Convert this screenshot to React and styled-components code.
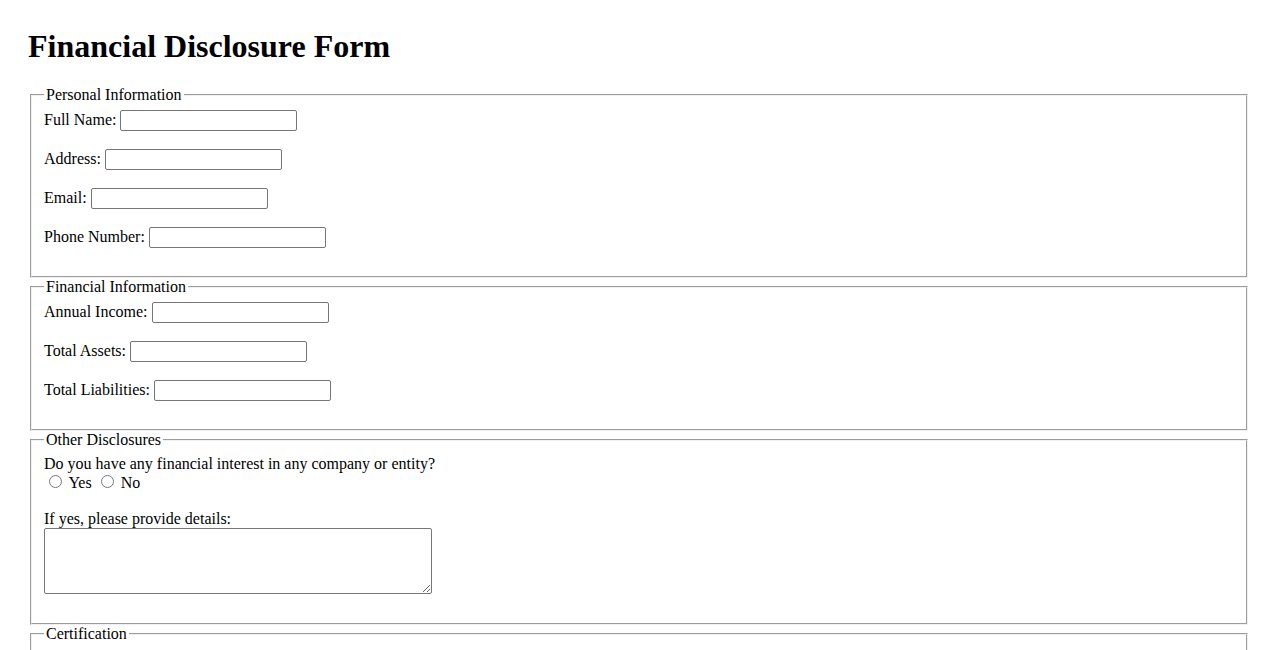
import React from "react";
import styled, { createGlobalStyle } from "styled-components";

const Global = createGlobalStyle`
  html, body { margin: 0; padding: 0; background: #fff; }
  body { font-family: "Liberation Serif", "Times New Roman", serif; font-size: 16px; color: #000; }
`;

const Page = styled.div`
  padding: 28px 28px 40px;
`;

const Title = styled.h1`
  font-size: 32px;
  font-weight: bold;
  margin: 0 0 21px;
  line-height: normal;
`;

const Form = styled.form`
  display: block;
`;

const Fieldset = styled.fieldset`
  margin: 0 2px;
  padding: 6px 12px 10px;
  border: 2px groove #f0f0f0;
  min-inline-size: min-content;
`;

const Legend = styled.legend`
  padding: 0 2px;
`;

const Row = styled.div`
  margin-bottom: ${(p) => (p.$gap ?? 18)}px;
`;

const Label = styled.label``;

const TextInput = styled.input`
  box-sizing: border-box;
  width: 177px;
  height: 21px;
  padding: 1px 2px;
  border: 1px solid #767676;
  border-radius: 2px;
  font-family: "Liberation Sans", Arial, sans-serif;
  font-size: 13.333px;
  vertical-align: baseline;
`;

const Radio = styled.input`
  margin: 2px 3px 0 5px;
`;

const TextArea = styled.textarea`
  display: block;
  box-sizing: border-box;
  width: 388px;
  height: 66px;
  margin: 0 0 19px;
  padding: 2px;
  border: 1px solid #767676;
  border-radius: 2px;
  font-family: "Liberation Mono", monospace;
  font-size: 13.333px;
`;

const Footer = styled.div`
  margin-top: 10px;
`;

const Button = styled.button`
  font-family: "Liberation Sans", Arial, sans-serif;
  font-size: 13.333px;
`;

const fields = [
  {
    legend: "Personal Information",
    items: [
      ["fullName", "Full Name:"],
      ["address", "Address:"],
      ["email", "Email:"],
      ["phone", "Phone Number:"],
    ],
  },
  {
    legend: "Financial Information",
    items: [
      ["income", "Annual Income:"],
      ["assets", "Total Assets:"],
      ["liabilities", "Total Liabilities:"],
    ],
  },
];

export default function App() {
  return (
    <>
      <Global />
      <Page>
        <Title>Financial Disclosure Form</Title>
        <Form onSubmit={(e) => e.preventDefault()}>
          {fields.map((f) => (
            <Fieldset key={f.legend}>
              <Legend>{f.legend}</Legend>
              {f.items.map(([id, label]) => (
                <Row key={id}>
                  <Label htmlFor={id}>{label}</Label> <TextInput id={id} type="text" />
                </Row>
              ))}
            </Fieldset>
          ))}
          <Fieldset>
            <Legend>Other Disclosures</Legend>
            <Row $gap={0}>Do you have any financial interest in any company or entity?</Row>
            <Row>
              <Radio type="radio" name="interest" id="yes" /> <Label htmlFor="yes">Yes</Label>{" "}
              <Radio type="radio" name="interest" id="no" /> <Label htmlFor="no">No</Label>
            </Row>
            <Row $gap={0}>
              <Label htmlFor="details">If yes, please provide details:</Label>
            </Row>
            <TextArea id="details" />
          </Fieldset>
          <Fieldset>
            <Legend>Certification</Legend>
            <Row>
              <input type="checkbox" id="certify" />{" "}
              <Label htmlFor="certify">
                I certify that the information provided is true and accurate to the best of my knowledge.
              </Label>
            </Row>
          </Fieldset>
          <Footer>
            <Button type="submit">Submit</Button>
          </Footer>
        </Form>
      </Page>
    </>
  );
}
